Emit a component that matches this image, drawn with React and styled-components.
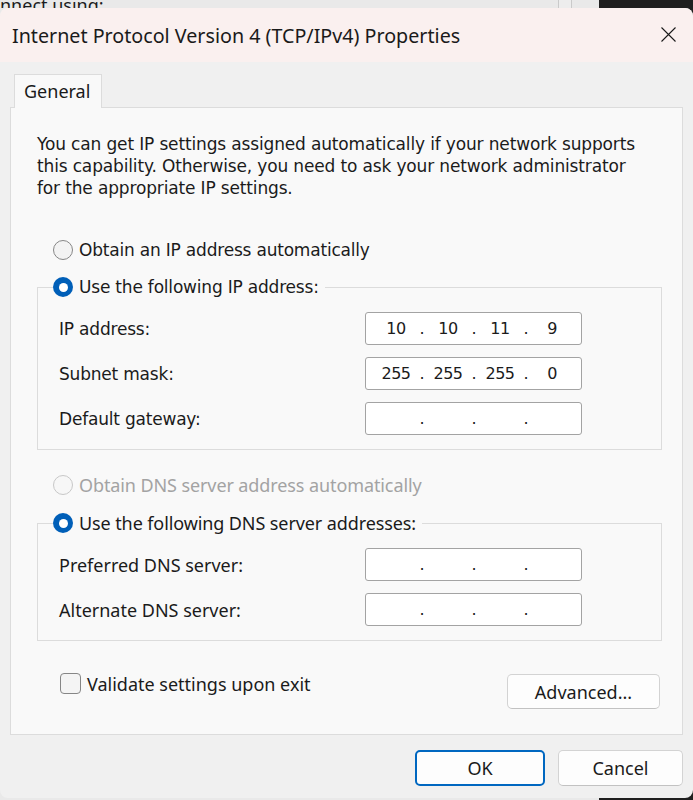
import React from "react";
import styled, { createGlobalStyle, css } from "styled-components";

const ui = `"Noto Sans", "Open Sans", sans-serif`;
const classic = `"DejaVu Sans", "Liberation Sans", sans-serif`;

const GlobalStyle = createGlobalStyle`
  * { box-sizing: border-box; }
  html, body { margin: 0; padding: 0; }
  body {
    background: linear-gradient(90deg, #e9e9e9 0 599px, #1f1f1f 599px);
  }
`;

const Screen = styled.div`
  width: 693px;
  height: 800px;
  overflow: hidden;
`;

// the window that sits behind the dialog, only a sliver shows
const BehindWindow = styled.div`
  display: flex;
  width: 599px;
  height: 8px;
  overflow: hidden;
`;

const BehindCaption = styled.div`
  flex: 1;
  margin-top: -6px;
  font: 18px/22px ${ui};
  color: #1c1c1c;
  white-space: nowrap;
`;

const BehindScrollbar = styled.div`
  width: 14px;
  margin-right: 27px;
  border-left: 1px solid #cacaca;
  border-right: 1px solid #cacaca;
  background: #ededed;
`;

const Dialog = styled.div`
  display: flex;
  flex-direction: column;
  background: #f0f0f0;
  border-radius: 8px;
  overflow: hidden;
`;

const TitleBar = styled.div`
  display: flex;
  align-items: center;
  justify-content: space-between;
  height: 54px;
  padding-left: 12px;
  background: #faf0ef;
`;

const Title = styled.div`
  font: 19.7px ${ui};
  color: #1a1a1a;
`;

const CloseButton = styled.div`
  display: flex;
  align-items: center;
  height: 100%;
  padding: 0 17px 2px 20px;
`;

const Body = styled.div`
  display: flex;
  flex-direction: column;
  padding: 12px 10px 0;
`;

const TabStrip = styled.div`
  display: flex;
  padding-left: 4px;
`;

const Tab = styled.div`
  position: relative;
  z-index: 1;
  width: 88px;
  height: 34px;
  margin-bottom: -1px;
  padding-left: 9px;
  border: 1px solid #dcdcdc;
  border-bottom: none;
  background: #f9f9f9;
  font: 18px/32px ${ui};
  color: #1a1a1a;
`;

const Panel = styled.div`
  display: flex;
  flex-direction: column;
  padding: 25px 20px 25px 26px;
  border: 1px solid #dcdcdc;
  background: #f9f9f9;
`;

const Description = styled.p`
  margin: 0;
  font: 17px/22px ${classic};
  color: #1b1b1b;
  white-space: nowrap;
  letter-spacing: -0.15px;
`;

const Option = styled.label`
  display: flex;
  align-items: center;
  gap: 6px;
  height: 22px;
  margin: ${({ $top }) => $top || 0}px 0 0 ${({ $inset }) => ($inset ? 16 : 0)}px;
  font: ${({ $modern }) => ($modern ? `18px ${ui}` : `17px ${classic}`)};
  letter-spacing: ${({ $modern }) => ($modern ? "-0.1px" : "-0.2px")};
  color: ${({ $disabled }) => ($disabled ? "#a3a3a3" : "#1b1b1b")};
  white-space: nowrap;
`;

const RadioDot = styled.span`
  flex: none;
  width: 20px;
  height: 20px;
  border-radius: 50%;
  ${({ $checked, $disabled }) =>
    $checked
      ? css`
          display: flex;
          align-items: center;
          justify-content: center;
          background: #005fb8;
          &::after {
            content: "";
            width: 9px;
            height: 9px;
            border-radius: 50%;
            background: #fff;
          }
        `
      : css`
          border: 1px solid ${$disabled ? "#c8c8c8" : "#868686"};
          background: ${$disabled ? "#f7f7f7" : "#f3f3f3"};
        `}
`;

const Group = styled.fieldset`
  min-width: 0;
  margin: ${({ $top }) => $top}px 0 0;
  padding: 14px 79px 14px 21px;
  border: 1px solid #dcdcdc;
`;

const Legend = styled.legend`
  margin-left: -6px;
  padding: 0 6px 0 0;
`;

const Fields = styled.div`
  display: flex;
  flex-direction: column;
  gap: 12px;
`;

const FieldRow = styled.div`
  display: flex;
  align-items: center;
  justify-content: space-between;
  height: 33px;
`;

const FieldLabel = styled.span`
  font: ${({ $modern }) => ($modern ? `18px ${ui}` : `17px ${classic}`)};
  letter-spacing: ${({ $modern }) => ($modern ? "0" : "-0.2px")};
  color: #1b1b1b;
`;

const IpBox = styled.div`
  display: flex;
  align-items: center;
  width: 217px;
  height: 33px;
  padding-left: 10px;
  border: 1px solid #a3a3a3;
  border-radius: 3px;
  background: #fff;
  font: 16px ${classic};
  color: #1b1b1b;
`;

const Octet = styled.span`
  width: 40px;
  text-align: center;
  letter-spacing: -0.5px;
`;

const Dot = styled.span`
  width: 12px;
  text-align: center;
`;

const BottomRow = styled.div`
  display: flex;
  align-items: flex-start;
  justify-content: space-between;
  margin: 31px 2px 0 23px;
`;

const CheckOption = styled.label`
  display: flex;
  align-items: center;
  gap: 6px;
  height: 23px;
  font: 18px ${ui};
  color: #1b1b1b;
`;

const CheckBox = styled.span`
  width: 21px;
  height: 21px;
  border: 1px solid #868686;
  border-radius: 4px;
  background: #f4f4f4;
`;

const Button = styled.button`
  width: ${({ $width }) => $width}px;
  height: ${({ $height }) => $height || 36}px;
  margin-top: ${({ $top }) => $top || 0}px;
  padding: 0;
  border: 1px solid #d3d3d3;
  border-bottom-color: #c2c2c2;
  border-radius: 5px;
  background: #fdfdfd;
  font: 18px ${ui};
  color: #1a1a1a;
  ${({ $primary }) =>
    $primary &&
    css`
      border: 2px solid #0067c0;
    `}
`;

const Footer = styled.div`
  display: flex;
  justify-content: flex-end;
  gap: 13px;
  padding: 15px 0 12px;
`;

const CloseIcon = () => (
  <svg width="15" height="15" viewBox="0 0 15 15">
    <path d="M0.5 0.5 L14.5 14.5 M14.5 0.5 L0.5 14.5" stroke="#1a1a1a" strokeWidth="1.1" fill="none" />
  </svg>
);

const Radio = ({ children, checked, disabled, modern, inset, top }) => (
  <Option $modern={modern} $disabled={disabled} $inset={inset} $top={top}>
    <RadioDot $checked={checked} $disabled={disabled} />
    {children}
  </Option>
);

const IpField = ({ value }) => {
  const parts = value ? value.split(".") : ["", "", "", ""];
  return (
    <IpBox>
      {parts.map((p, i) => (
        <React.Fragment key={i}>
          {i > 0 && <Dot>.</Dot>}
          <Octet>{p}</Octet>
        </React.Fragment>
      ))}
    </IpBox>
  );
};

const ipRows = [
  { label: "IP address:", value: "10.10.11.9" },
  { label: "Subnet mask:", value: "255.255.255.0" },
  { label: "Default gateway:", value: "" },
];

const dnsRows = [
  { label: "Preferred DNS server:", value: "" },
  { label: "Alternate DNS server:", value: "" },
];

export default function App() {
  return (
    <Screen>
      <GlobalStyle />
      <BehindWindow>
        <BehindCaption>nnect using:</BehindCaption>
        <BehindScrollbar />
      </BehindWindow>
      <Dialog>
        <TitleBar>
          <Title>Internet Protocol Version 4 (TCP/IPv4) Properties</Title>
          <CloseButton>
            <CloseIcon />
          </CloseButton>
        </TitleBar>
        <Body>
          <TabStrip>
            <Tab>General</Tab>
          </TabStrip>
          <Panel>
            <Description>
              You can get IP settings assigned automatically if your network supports
              <br />
              this capability. Otherwise, you need to ask your network administrator
              <br />
              for the appropriate IP settings.
            </Description>

            <Radio inset top={40}>Obtain an IP address automatically</Radio>
            <Group $top={15}>
              <Legend>
                <Radio checked>Use the following IP address:</Radio>
              </Legend>
              <Fields>
                {ipRows.map((r) => (
                  <FieldRow key={r.label}>
                    <FieldLabel>{r.label}</FieldLabel>
                    <IpField value={r.value} />
                  </FieldRow>
                ))}
              </Fields>
            </Group>

            <Radio inset disabled modern top={24}>Obtain DNS server address automatically</Radio>
            <Group $top={16}>
              <Legend>
                <Radio checked modern>Use the following DNS server addresses:</Radio>
              </Legend>
              <Fields>
                {dnsRows.map((r) => (
                  <FieldRow key={r.label}>
                    <FieldLabel $modern>{r.label}</FieldLabel>
                    <IpField value={r.value} />
                  </FieldRow>
                ))}
              </Fields>
            </Group>

            <BottomRow>
              <CheckOption>
                <CheckBox />
                Validate settings upon exit
              </CheckOption>
              <Button $width={153} $height={35} $top={2}>Advanced...</Button>
            </BottomRow>
          </Panel>
          <Footer>
            <Button $primary $width={130}>OK</Button>
            <Button $width={125}>Cancel</Button>
          </Footer>
        </Body>
      </Dialog>
    </Screen>
  );
}
